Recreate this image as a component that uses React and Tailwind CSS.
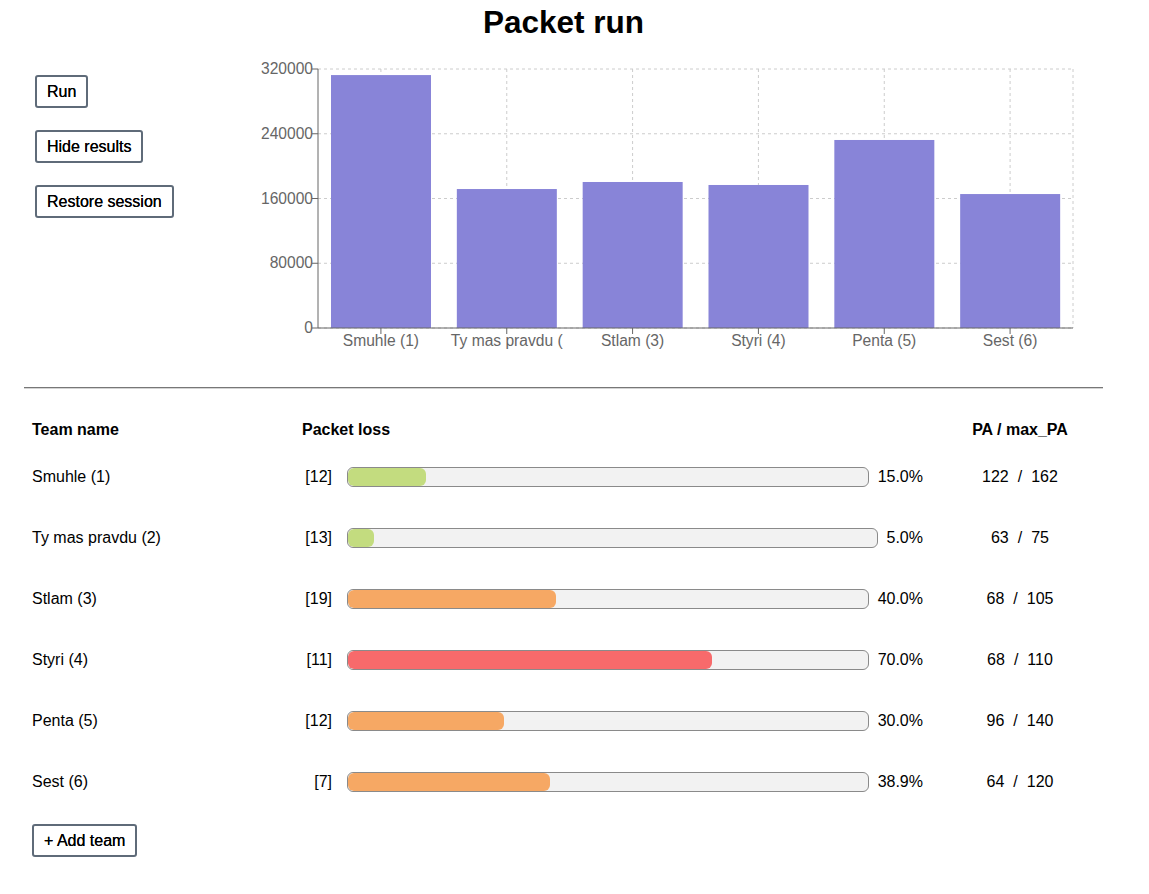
const chartData = [
  { name: 'Smuhle (1)', value: 312500 },
  { name: 'Ty mas pravdu (', value: 171700 },
  { name: 'Stlam (3)', value: 180400 },
  { name: 'Styri (4)', value: 176700 },
  { name: 'Penta (5)', value: 232300 },
  { name: 'Sest (6)', value: 165500 },
];

const teams = [
  { name: 'Smuhle (1)', count: 12, loss: 15.0, color: 'bg-[#c3dc7f]', pa: 122, max: 162 },
  { name: 'Ty mas pravdu (2)', count: 13, loss: 5.0, color: 'bg-[#c3dc7f]', pa: 63, max: 75 },
  { name: 'Stlam (3)', count: 19, loss: 40.0, color: 'bg-[#f6a864]', pa: 68, max: 105 },
  { name: 'Styri (4)', count: 11, loss: 70.0, color: 'bg-[#f76a6b]', pa: 68, max: 110 },
  { name: 'Penta (5)', count: 12, loss: 30.0, color: 'bg-[#f6a864]', pa: 96, max: 140 },
  { name: 'Sest (6)', count: 7, loss: 38.9, color: 'bg-[#f6a864]', pa: 64, max: 120 },
];

const X0 = 78;
const X1 = 833;
const Y0 = 14;
const Y1 = 273;
const MAX = 320000;

const yPos = (v) => Y1 - (v / MAX) * (Y1 - Y0);

const BarChart = () => {
  const band = (X1 - X0) / chartData.length;
  const ticks = [0, 80000, 160000, 240000, 320000];

  return (
    <svg width="850" height="300" className="block" style={{ fontFamily: '"Liberation Sans", Arial, sans-serif' }}>
      {/* grid */}
      <g stroke="#ccc" strokeDasharray="3 3">
        {ticks.map(t => (
          <line key={t} x1={X0} x2={X1} y1={yPos(t)} y2={yPos(t)} />
        ))}
        {chartData.map((d, i) => (
          <line key={d.name} x1={X0 + band * (i + 0.5)} x2={X0 + band * (i + 0.5)} y1={Y0} y2={Y1} />
        ))}
        <line x1={X1} x2={X1} y1={Y0} y2={Y1} />
      </g>

      {/* bars */}
      {chartData.map((d, i) => (
        <rect
          key={d.name}
          x={X0 + band * i + 13}
          y={yPos(d.value)}
          width={100}
          height={Y1 - yPos(d.value)}
          fill="#8884d8"
        />
      ))}

      {/* axes */}
      <g stroke="#666">
        <line x1={X0} x2={X0} y1={Y0} y2={Y1} />
        <line x1={X0} x2={X1} y1={Y1} y2={Y1} />
        {ticks.map(t => (
          <line key={t} x1={X0 - 6} x2={X0} y1={yPos(t)} y2={yPos(t)} />
        ))}
        {chartData.map((d, i) => (
          <line key={d.name} x1={X0 + band * (i + 0.5)} x2={X0 + band * (i + 0.5)} y1={Y1} y2={Y1 + 6} />
        ))}
      </g>

      <g fill="#666" fontSize="15.6">
        {ticks.map(t => (
          <text key={t} x={X0 - 5} y={yPos(t) + 5} textAnchor="end">{t}</text>
        ))}
        {chartData.map((d, i) => (
          <text key={d.name} x={X0 + band * (i + 0.5)} y={Y1 + 18} textAnchor="middle">{d.name}</text>
        ))}
      </g>
    </svg>
  );
};

const Button = ({ children }) => (
  <button className="h-[33px] px-[10px] border-2 border-[#5f6b79] rounded-[3px] bg-white text-[16px] font-medium text-black [text-shadow:0_0_0.4px_#000]">
    {children}
  </button>
);

export default function App() {
  return (
    <div className="min-h-screen bg-white text-black text-[16px]" style={{ fontFamily: '"Liberation Sans", Arial, sans-serif' }}>
      <div className="ml-[24px] w-[1079px]">
        <h1 className="mt-[4px] h-[36px] leading-[36px] text-center text-[31.5px] font-bold">Packet run</h1>

        {/* Controls and chart */}
        <div className="flex items-start">
          <div className="w-[216px] pt-[35px] pl-[11px] flex flex-col items-start gap-[22px]">
            <Button>Run</Button>
            <Button>Hide results</Button>
            <Button>Restore session</Button>
          </div>
          <div className="mt-[15px]">
            <BarChart />
          </div>
        </div>

        <div className="mt-[32px] border-t border-[#777] border-b border-b-[#d4d4d4]" />

        {/* Results table */}
        <div className="mt-[25px]">
          <div className="grid grid-cols-[278px_621px_1fr] h-[32px] items-center font-bold">
            <div className="pl-[8px]">Team name</div>
            <div>Packet loss</div>
            <div className="text-center pl-[14px] whitespace-pre">PA / max_PA</div>
          </div>
          {teams.map(team => (
            <div key={team.name} className="grid grid-cols-[278px_621px_1fr] h-[61px] items-center">
              <div className="pl-[8px]">{team.name}</div>
              <div className="flex items-center">
                <span className="w-[30px] text-right">[{team.count}]</span>
                <div className="ml-[15px] flex-1 h-[20px] rounded-[6px] border border-[#8a8a8a] bg-[#f2f2f2] overflow-hidden">
                  <div className={`h-full rounded-[6px] ${team.color}`} style={{ width: `${team.loss}%` }} />
                </div>
                <span className="ml-[9px]">{team.loss.toFixed(1)}%</span>
              </div>
              <div className="text-center pl-[14px]">
                {team.pa}<span className="mx-[9px]">/</span>{team.max}
              </div>
            </div>
          ))}
        </div>

        <div className="mt-[12px] pl-[8px]">
          <Button>+ Add team</Button>
        </div>
      </div>
    </div>
  );
}
